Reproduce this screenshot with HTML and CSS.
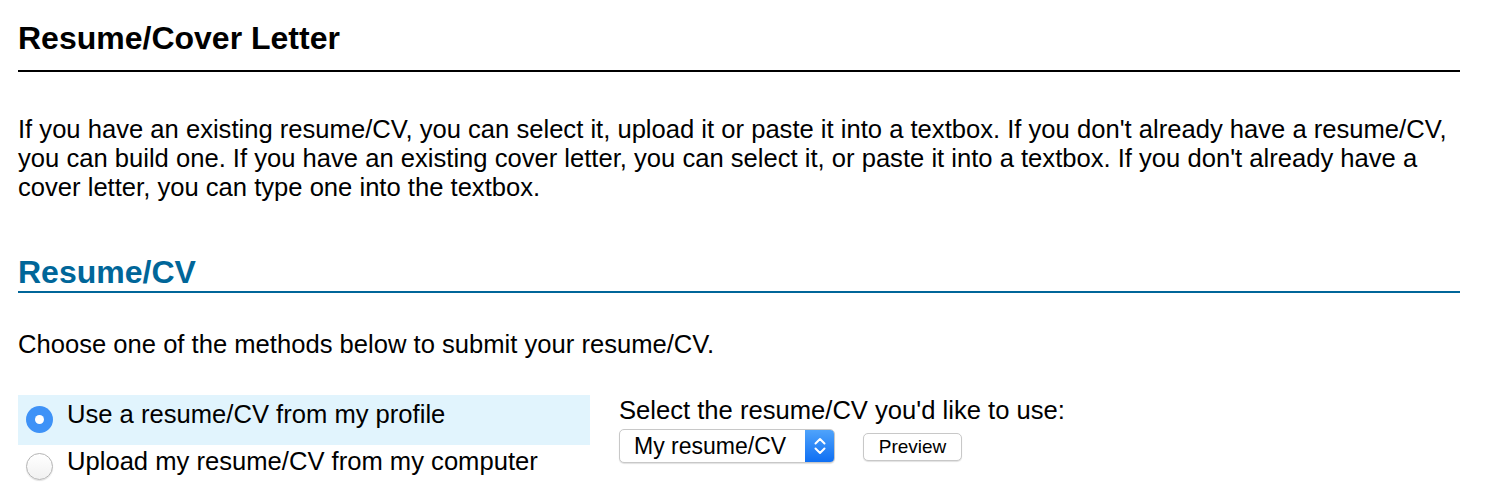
FILE: index.html
```html
<!DOCTYPE html>
<html lang="en">
<head>
<meta charset="utf-8">
<title>Resume/Cover Letter</title>
<link rel="stylesheet" href="styles.css">
</head>
<body>
<div class="page">
  <h1 class="title">Resume/Cover Letter</h1>
  <p class="intro">If you have an existing resume/CV, you can select it, upload it or paste it into a textbox. If you don't already have a resume/CV, you can build one. If you have an existing cover letter, you can select it, or paste it into a textbox. If you don't already have a cover letter, you can type one into the textbox.</p>
  <h2 class="section">Resume/CV</h2>
  <p class="lead">Choose one of the methods below to submit your resume/CV.</p>
  <div class="methods">
    <div class="options">
      <div class="option selected"><span class="radio on"><span class="dot"></span></span><span class="option-text">Use a resume/CV from my profile</span></div>
      <div class="option"><span class="radio"></span><span class="option-text">Upload my resume/CV from my computer</span></div>
    </div>
    <div class="picker">
      <div class="picker-label">Select the resume/CV you'd like to use:</div>
      <div class="picker-row">
        <div class="select">
          <span class="select-text">My resume/CV</span>
          <span class="select-arrows">
            <svg width="14" height="24" viewBox="0 0 14 24"><path d="M2.5 9.5 L7 5 L11.5 9.5" fill="none" stroke="#fff" stroke-width="2" stroke-linecap="round" stroke-linejoin="round"/><path d="M2.5 14.5 L7 19 L11.5 14.5" fill="none" stroke="#fff" stroke-width="2" stroke-linecap="round" stroke-linejoin="round"/></svg>
          </span>
        </div>
        <button class="btn" type="button">Preview</button>
      </div>
    </div>
  </div>
</div>
</body>
</html>
```
FILE: styles.css
```css
html, body {
  margin: 0;
  padding: 0;
  background: #fff;
}
body {
  font-family: "Liberation Sans", Arial, Helvetica, sans-serif;
  color: #000;
  font-size: 25.6px;
  line-height: 28.8px;
}
.page {
  padding: 0 30px 0 18px;
}
.title {
  margin: 20px 0 0;
  padding-bottom: 13px;
  font-size: 32px;
  line-height: 37px;
  font-weight: bold;
  border-bottom: 2px solid #000;
}
.intro {
  margin: 43px 0 0;
}
.section {
  margin: 53px 0 0;
  font-size: 32px;
  line-height: 37px;
  font-weight: bold;
  color: #006699;
  border-bottom: 2px solid #006699;
}
.lead {
  margin: 37px 0 0;
}
.methods {
  display: flex;
  gap: 29px;
  margin-top: 36px;
}
.options {
  width: 572px;
  display: flex;
  flex-direction: column;
}
.option {
  display: flex;
  align-items: flex-start;
  gap: 14px;
  padding: 5px 0 12px 8px;
}
.option.selected {
  background: #e1f4fd;
}
.option + .option {
  padding-top: 2px;
}
.radio {
  width: 27px;
  height: 27px;
  border-radius: 50%;
  box-sizing: border-box;
  margin-top: 6px;
  flex: none;
  border: 1px solid #b4b4b4;
  background: linear-gradient(#ffffff, #f1f1f1);
  box-shadow: 0 1px 1px rgba(0,0,0,0.12);
  display: flex;
  align-items: center;
  justify-content: center;
}
.radio.on {
  border: none;
  background: #3e92f7;
  box-shadow: none;
}
.dot {
  width: 9px;
  height: 9px;
  border-radius: 50%;
  background: #fff;
}
.picker {
  padding-top: 1px;
}
.picker-label {
  line-height: 28.8px;
}
.picker-row {
  display: flex;
  align-items: center;
  margin-top: 4px;
}
.select {
  width: 216px;
  height: 34px;
  box-sizing: border-box;
  border: 1px solid #c8c8c8;
  border-radius: 5px;
  background: #fff;
  box-shadow: 0 1px 1px rgba(0,0,0,0.12);
  display: flex;
  align-items: stretch;
  overflow: hidden;
}
.select-text {
  flex: 1;
  font-size: 23px;
  line-height: 32px;
  padding-left: 14px;
}
.select-arrows {
  width: 29px;
  background: linear-gradient(#4fa3fb, #0f6ff3);
  display: flex;
  align-items: center;
  justify-content: center;
}
.btn {
  margin-left: 28px;
  width: 99px;
  height: 28px;
  box-sizing: border-box;
  border: 1px solid #c8c8c8;
  border-radius: 5px;
  background: #fff;
  box-shadow: 0 1px 1px rgba(0,0,0,0.12);
  font-family: "Liberation Sans", Arial, Helvetica, sans-serif;
  font-size: 19px;
  color: #000;
  padding: 0;
  margin-top: 2px;
}
```
